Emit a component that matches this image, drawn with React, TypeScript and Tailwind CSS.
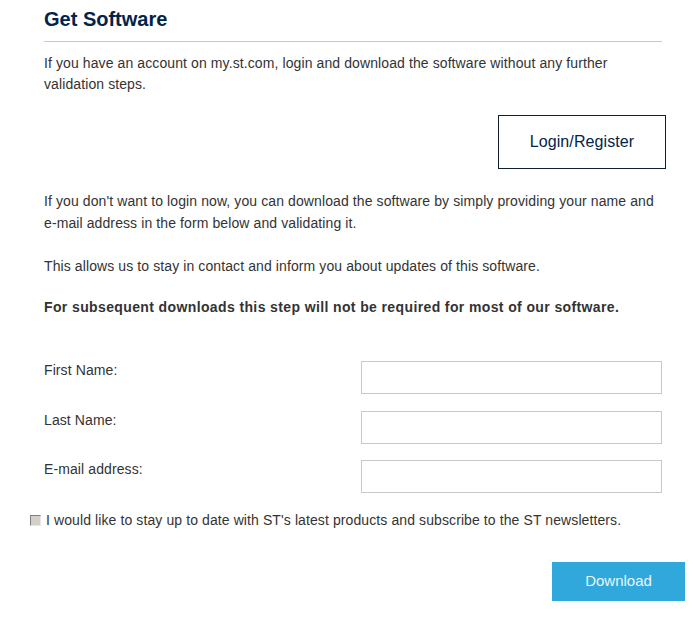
export default function App() {
  const fields = ['First Name:', 'Last Name:', 'E-mail address:']

  return (
    <div className="w-[699px] h-[619px] bg-white text-[#333] font-['Liberation_Sans',Arial,sans-serif] text-[14px] tracking-[0.1px] overflow-hidden">
      <div className="pl-[44px] pr-[37px] pt-[7px]">
        <h2 className="text-[20px] leading-[24px] font-bold tracking-normal text-[#03234b] pb-[10px] border-b border-[#c8c8c8]">
          Get Software
        </h2>
        <p className="mt-[11px] leading-[21px]">
          If you have an account on my.st.com, login and download the software without any further validation steps.
        </p>
        <div className="flex justify-end mt-[20px] -mr-[4px]">
          <button className="w-[168px] h-[54px] border border-[#0f1e33] text-[16px] text-[#03234b] bg-white">
            Login/Register
          </button>
        </div>
        <p className="mt-[21px] leading-[22px]">
          If you don't want to login now, you can download the software by simply providing your name and e&#8209;mail address in the form below and validating it.
        </p>
        <p className="mt-[21px] leading-[22px]">
          This allows us to stay in contact and inform you about updates of this software.
        </p>
        <p className="mt-[19px] leading-[22px] font-bold tracking-[0.38px]">
          For subsequent downloads this step will not be required for most of our software.
        </p>
        <div className="mt-[43px] flex flex-col gap-[16.5px]">
          {fields.map((f) => (
            <div key={f} className="flex items-start">
              <label className="w-[317px] leading-[21px] -mt-[1px]">{f}</label>
              <input className="flex-1 h-[33px] border border-[#c9c9c9] bg-white outline-none" />
            </div>
          ))}
        </div>
      </div>
      <div className="pl-[30px] mt-[17px] flex items-center gap-[5px]">
        <span className="w-[11px] h-[11px] bg-[#d4d0c8] border-t border-l border-t-[#808080] border-l-[#808080] border-b border-r border-b-[#e8e8e8] border-r-[#e8e8e8]" />
        <span className="leading-[20px]">
          I would like to stay up to date with ST's latest products and subscribe to the ST newsletters.
        </span>
      </div>
      <div className="flex justify-end pr-[14px] mt-[32px]">
        <button className="w-[133px] h-[39px] bg-[#31a8dc] text-[#e8f6fc] text-[15px] tracking-normal">Download</button>
      </div>
    </div>
  )
}
